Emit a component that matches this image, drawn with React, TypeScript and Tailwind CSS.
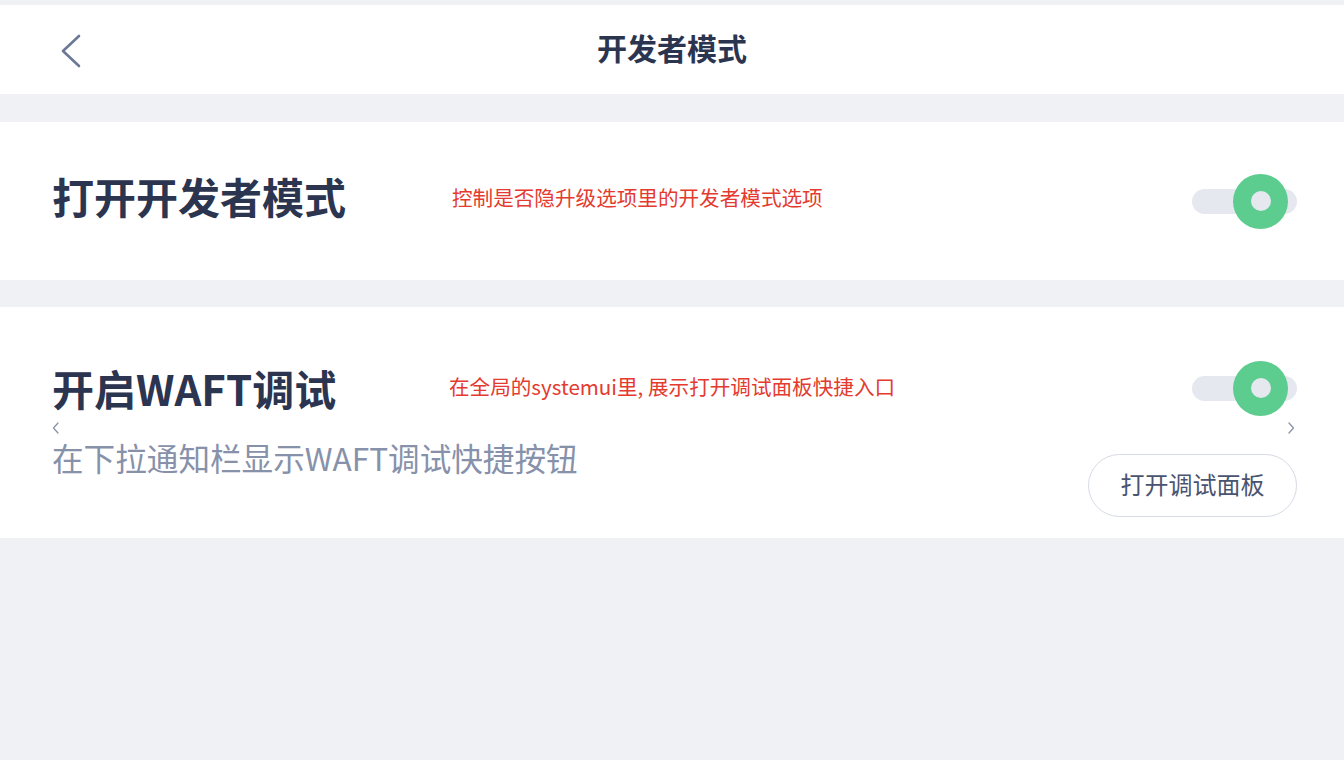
import React from "react";

function Toggle() {
  return (
    <div className="relative w-[105px] h-[25px] rounded-full bg-[#e6e8f0]">
      <div className="absolute left-[41px] top-[-15px] w-[55px] h-[55px] rounded-full bg-[#5ccd8e] flex items-center justify-center">
        <div className="w-[20px] h-[20px] rounded-full bg-[#e6e8f0]" />
      </div>
    </div>
  );
}

export default function App() {
  return (
    <div
      className="w-[1344px] h-[760px] bg-[#f0f1f5] overflow-hidden"
      style={{ fontFamily: '"Noto Sans CJK SC", "Noto Sans", sans-serif' }}
    >
      <div className="h-[5px]" />
      <div className="h-[89px] bg-white relative flex items-center justify-center">
        <svg
          className="absolute left-[58px] top-[24px]"
          width="28"
          height="44"
          viewBox="0 0 28 44"
          fill="none"
        >
          <path d="M21 7 L5 22 L21 37" stroke="#6b7896" strokeWidth="2.6" strokeLinecap="round" strokeLinejoin="round" />
        </svg>
        <span className="text-[30px] font-bold text-[#2c3550] leading-none mt-[-6px]">开发者模式</span>
      </div>
      <div className="h-[28px]" />
      <div className="h-[158px] bg-white relative flex items-center justify-between pl-[52px] pr-[47px]">
        <span className="text-[42px] font-bold text-[#2c3550] leading-[50px] mt-[-10px]">打开开发者模式</span>
        <span className="absolute left-[452px] top-[61px] text-[20.6px] leading-[28px] text-[#e43a2f]">
          控制是否隐升级选项里的开发者模式选项
        </span>
        <Toggle />
      </div>
      <div className="h-[27px]" />
      <div className="h-[231px] bg-white relative pl-[52px] pr-[47px] pt-[56px]">
        <span className="absolute left-[449px] top-[65px] text-[20.6px] leading-[28px] text-[#e43a2f]">
          在全局的systemui里, 展示打开调试面板快捷入口
        </span>
        <div className="flex items-center justify-between h-[50px]">
          <span className="text-[42px] font-bold text-[#2c3550] leading-[50px]">开启WAFT调试</span>
          <div className="mt-[0px]">
            <Toggle />
          </div>
        </div>
        <div className="flex items-center justify-between h-[16px] mt-[7px] text-[#7d879e]">
          <svg width="10" height="14" viewBox="0 0 10 14" fill="none" className="ml-[-1px]">
            <path d="M7 2 L2.5 7 L7 12" stroke="#8a93a8" strokeWidth="1.3" strokeLinecap="round" strokeLinejoin="round" />
          </svg>
          <svg width="10" height="14" viewBox="0 0 10 14" fill="none" className="mr-[1px]">
            <path d="M3 2 L7.5 7 L3 12" stroke="#8a93a8" strokeWidth="1.3" strokeLinecap="round" strokeLinejoin="round" />
          </svg>
        </div>
        <div className="flex items-start justify-between mt-[0px]">
          <span className="text-[31.6px] text-[#8791aa] leading-[40px] mt-[1px]">在下拉通知栏显示WAFT调试快捷按钮</span>
          <div className="mt-[18px] w-[209px] h-[63px] rounded-full border border-[#d6dae4] flex items-center justify-center">
            <span className="text-[24px] text-[#4a5470] leading-none mt-[-4px]">打开调试面板</span>
          </div>
        </div>
      </div>
    </div>
  );
}
